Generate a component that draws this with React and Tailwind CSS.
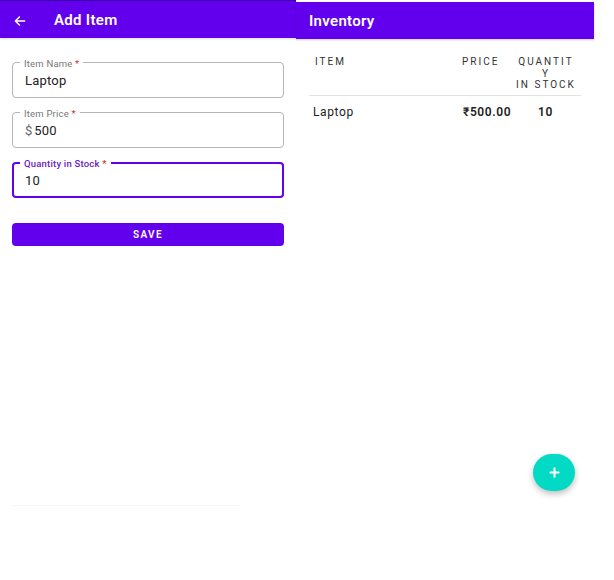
import React from "react";

function Field({ label, value, prefix, focused }) {
  return (
    <div className="relative">
      <div
        className={
          focused
            ? "h-[36px] rounded-[4px] border-2 border-[#6200ee] flex items-center px-[11px] pt-[1px]"
            : "h-[36px] rounded-[4px] border border-[#b5b5b5] flex items-center px-[12px] pt-[2px]"
        }
      >
        {prefix && <span className="text-[13px] text-[#666] mr-[2px]">{prefix}</span>}
        <span className="text-[13px] text-[#222] tracking-[0.2px]">{value}</span>
      </div>
      <div
        className={
          "absolute left-[8px] top-[-4px] bg-white px-[4px] text-[9.5px] leading-[11px] tracking-[0.2px] " +
          (focused ? "text-[#6a1bc4] font-medium" : "text-[#777]")
        }
      >
        {label} <span className="text-[#d32f2f]">*</span>
      </div>
    </div>
  );
}

export default function App() {
  return (
    <div
      className="w-[614px] h-[580px] bg-white flex overflow-hidden"
      style={{ fontFamily: "Roboto, 'Noto Sans', 'DejaVu Sans', sans-serif" }}
    >
      {/* Left panel */}
      <div className="w-[296px] flex flex-col">
        <div className="h-[38px] bg-[#6200ee] border-t border-[#3a00a8] flex items-center pt-[2px] shadow-[0_1px_2px_rgba(0,0,0,0.15)]">
          <svg width="14" height="14" viewBox="0 0 24 24" className="ml-[13px]" fill="none" stroke="white" strokeWidth="2.5" strokeLinecap="round" strokeLinejoin="round">
            <path d="M20 12H4M11 5l-7 7 7 7" />
          </svg>
          <span className="ml-[27px] text-white text-[15px] font-semibold tracking-[0.3px]">Add Item</span>
        </div>
        <div className="px-[12px] pt-[24px] flex flex-col gap-[14px]">
          <Field label="Item Name" value="Laptop" />
          <Field label="Item Price" value="500" prefix="$" />
          <Field label="Quantity in Stock" value="10" focused />
        </div>
        <div className="px-[12px] mt-[25px]">
          <div className="h-[23px] rounded-[4px] bg-[#6200ee] flex items-center justify-center text-white text-[10px] font-semibold tracking-[1.4px]">
            SAVE
          </div>
        </div>
        <div className="mx-[12px] mt-[259px] h-px bg-[#f6f6f6] w-[228px]" />
      </div>

      {/* Right panel */}
      <div className="w-[298px] relative flex flex-col">
        <div className="h-[37px] mt-[2px] bg-[#6200ee] flex items-center pt-[1px] shadow-[0_1px_2px_rgba(0,0,0,0.2)]">
          <span className="ml-[13px] text-white text-[15px] font-semibold tracking-[0.3px]">Inventory</span>
        </div>
        <div className="mx-[13px] mt-[16px]">
          <div className="flex text-[10px] tracking-[2px] text-[#333] leading-[11.5px] pt-[1px] pb-[4px] border-b border-[#e2e2e2]">
            <div className="pl-[6px] w-[153px]">ITEM</div>
            <div className="w-[50px]">PRICE</div>
            <div className="w-[68px] text-center">
              QUANTIT<br />Y<br />IN STOCK
            </div>
          </div>
          <div className="flex items-center h-[32px] text-[12px] text-[#222] tracking-[0.6px]">
            <div className="pl-[4px] w-[154px]">Laptop</div>
            <div className="w-[60px] font-semibold">₹500.00</div>
            <div className="w-[45px] text-center font-semibold">10</div>
          </div>
        </div>
        <div className="absolute left-[237px] top-[454px] w-[42px] h-[37px] rounded-full bg-[#03dac5] flex items-center justify-center shadow-[0_3px_6px_rgba(0,0,0,0.25)]">
          <svg width="11" height="11" viewBox="0 0 12 12" stroke="white" strokeWidth="2.2" strokeLinecap="round">
            <path d="M6 1.5v9M1.5 6h9" />
          </svg>
        </div>
      </div>
    </div>
  );
}
